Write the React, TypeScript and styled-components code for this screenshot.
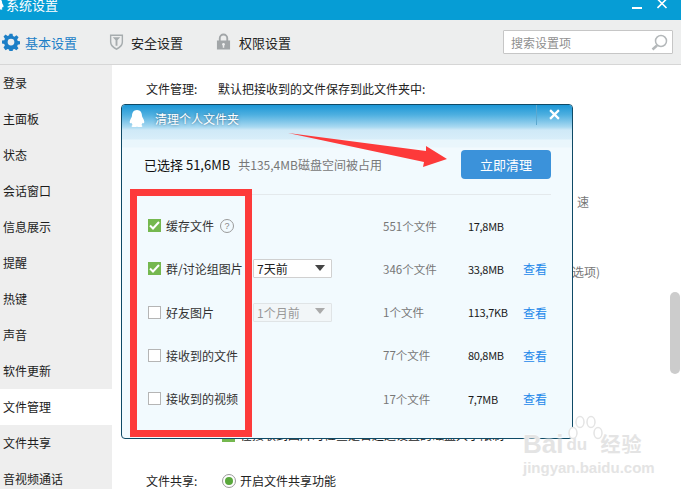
import React from 'react';
import styled, { createGlobalStyle } from 'styled-components';

const Global = createGlobalStyle`
  html, body { margin: 0; padding: 0; background: #fff; }
  body { font-family: "Noto Sans CJK SC", "Liberation Sans", sans-serif; font-size: 12px; color: #222; }
`;
const Page = styled.div`
  position: relative; width: 681px; height: 489px; overflow: hidden; display: flex; flex-direction: column;
`;
const TitleBar = styled.header`
  height: 20px; background: #069dd5; color: #fff; display: flex; align-items: flex-start; flex: none;
  justify-content: space-between; overflow: hidden;
`;
const TitleLeft = styled.div`
  display: flex; align-items: center; gap: 2px; margin-top: -4px; font-size: 13px; line-height: 18px; margin-left: -6px;
`;
const WinButtons = styled.div`
  display: flex; gap: 14px; margin-right: 13px; align-items: flex-start;
`;
const Toolbar = styled.nav`
  height: 44px; background: #edeeee; border-bottom: 1px solid #d6d6d6; flex: none; display: flex; align-items: center;
  box-sizing: content-box; padding-left: 2px;
`;
const Tab = styled.div<{ $active?: boolean; $w: number; $gap: number }>`
  width: ${p => p.$w}px; display: flex; align-items: center; gap: ${p => p.$gap}px; font-size: 13px;
  color: ${p => (p.$active ? '#1c7fc7' : '#222')};
`;
const Search = styled.div`
  margin-left: auto; margin-right: 8px; height: 22px; background: #fff; border: 1px solid #c6c6c6;
  border-radius: 1px; display: flex; align-items: center; justify-content: space-between; padding: 0 4px 0 7px;
  box-sizing: content-box; color: #8f8f8f; font-size: 12px; width: 157px;
`;
const Body = styled.div`
  flex: 1; display: flex; min-height: 0;
`;
const Sidebar = styled.aside`
  width: 112px; background: #eeeeee; flex: none;
`;
const SideItem = styled.div<{ $active?: boolean }>`
  height: 36px; box-sizing: border-box; display: flex; align-items: center; padding: 0 0 2px 3px; font-size: 12px; color: #1c1c1c;
  background: ${p => (p.$active ? '#fff' : 'transparent')};
`;
const Content = styled.main`
  flex: 1; display: flex; flex-direction: column; background: #fff; position: relative; padding-left: 34px;
`;
const BgRow = styled.div<{ $top: number; $indent?: number; $muted?: boolean }>`
  margin-top: ${p => p.$top}px; padding-left: ${p => p.$indent ?? 0}px; height: 16px; line-height: 16px;
  display: flex; align-items: center; white-space: nowrap; color: ${p => (p.$muted ? '#777' : '#222')};
`;
const BgLabel = styled.span`
  width: 72px; flex: none;
`;
const Radio = styled.span`
  width: 12px; height: 12px; border: 1px solid #9a9a9a; border-radius: 50%; margin: 0 4px 0 4px; display: flex;
  align-items: center; justify-content: center; background: #fff; flex: none;
  &::after { content: ''; width: 8px; height: 8px; border-radius: 50%; background: #5aa83c; }
`;
const Scrollbar = styled.div`
  position: absolute; right: 1px; top: 227px; width: 10px; height: 82px; border-radius: 5px; background: #cccccc;
`;
const Dialog = styled.section`
  position: absolute; left: 121px; top: 104px; width: 452px; height: 335px; box-sizing: border-box;
  border: 1px solid #0f4a66; border-radius: 4px; overflow: hidden; display: flex; flex-direction: column;
  background: #f2fafe;
`;
const DialogTitle = styled.div`
  height: 43px; flex: none; display: flex; align-items: flex-start; justify-content: space-between;
  background: linear-gradient(#1c97d6 0, #4fb0e0 10px, #a9d9f1 22px, #cfe9f7 25px, #d8eef9 34px, #e9f6fc 35px, #eaf6fc 42px, #f2fafe 43px);
  color: #fff;
`;
const DialogTitleLeft = styled.div`
  display: flex; align-items: center; gap: 10px; padding: 5px 0 0 7px; font-size: 12px; line-height: 18px;
  text-shadow: 0 0 3px rgba(40,80,110,.8);
`;
const DialogClose = styled.div`
  width: 35px; height: 18px; border-left: 1px solid #5ca8cf; display: flex; justify-content: center;
  align-items: center; padding-bottom: 2px;
`;
const Summary = styled.div`
  height: 47px; margin: 0 21px 0 22px; flex: none; display: flex; align-items: center; justify-content: space-between;
  border-bottom: 1px solid #e4e9ec; padding-bottom: 1px; box-sizing: border-box;
`;
const SummaryText = styled.div`
  display: flex; align-items: baseline; gap: 8px; margin-top: -12px;
`;
const Selected = styled.span`
  font-size: 13px; color: #111;
`;
const Total = styled.span`
  font-size: 12px; color: #777;
`;
const CleanBtn = styled.button`
  width: 90px; height: 29px; border: 0; border-radius: 4px; background: #3b92da; color: #fff; font: inherit;
  font-size: 13px; padding: 0; margin-top: -12px;
`;
const Rows = styled.div`
  display: flex; flex-direction: column; padding-top: 9px;
`;
const Row = styled.div`
  height: 43.25px; display: grid; grid-template-columns: 105px 130px 85px 55px auto; align-items: center; padding-left: 26px;
`;
const Check = styled.span<{ $on?: boolean }>`
  width: 13px; height: 13px; box-sizing: border-box; border: 1px solid ${p => (p.$on ? '#75b84f' : '#b5b5b5')};
  background: ${p => (p.$on ? '#75b84f' : '#fff')}; display: flex; align-items: center; justify-content: center; flex: none;
`;
const CheckCell = styled.div`
  display: flex; align-items: center; gap: 5px; white-space: nowrap; color: #333;
`;
const BgCheckLabel = styled.span`
  margin-left: 5px;
`;
const Help = styled.span`
  width: 12px; height: 12px; border: 1px solid #9a9a9a; border-radius: 50%; color: #888; font-size: 9px; display: flex;
  align-items: center; justify-content: center; margin-left: 1px; box-sizing: content-box; font-family: "Liberation Sans", sans-serif;
`;
const Select = styled.div<{ $off?: boolean }>`
  width: 79px; height: 19px; box-sizing: border-box; border: 1px solid ${p => (p.$off ? '#e0e4e6' : '#d0d0d0')};
  background: ${p => (p.$off ? '#f2f6f8' : '#fff')}; color: ${p => (p.$off ? '#999' : '#222')};
  display: flex; align-items: center; justify-content: space-between; padding: 0 6px 0 3px; border-radius: 1px; font-size: 12px;
  &::after { content: ''; border-left: 5px solid transparent; border-right: 5px solid transparent;
    border-top: 6px solid ${p => (p.$off ? '#aaa' : '#444')}; margin-top: -2px; }
`;
const Count = styled.span`
  color: #777; font-size: 11.5px;
`;
const Size = styled.span`
  color: #1b1b1b; font-size: 11px; letter-spacing: -.3px;
`;
const Link = styled.a`
  color: #2288ea; font-size: 12px;
`;
const RedBox = styled.div`
  position: absolute; left: 130px; top: 189px; width: 122px; height: 248px; box-sizing: border-box; border: 7px solid #fd3a3a;
`;
const Arrow = styled.svg`
  position: absolute; left: 285px; top: 128px;
`;
const Watermark = styled.div`
  position: absolute; left: 523px; top: 415px; width: 125px; height: 60px; color: #e4e4e4;
  font-family: "Liberation Sans", sans-serif; text-shadow: 0 0 2px #fff, 0 0 2px #fff;
`;
const WmTop = styled.div`
  display: flex; align-items: center; font-size: 26px; font-weight: 700; height: 42px; padding-top: 15px;
  box-sizing: border-box; line-height: 26px;
`;
const WmDu = styled.span`
  font-size: 17px; width: 37px; padding-left: 3px; padding-top: 3px; box-sizing: border-box;
`;
const WmCn = styled.span`
  font-family: "Noto Sans CJK SC", sans-serif; font-size: 20px; font-weight: 700; letter-spacing: 1px;
`;
const WmUrl = styled.div`
  font-size: 15px; font-weight: 700; line-height: 16px; margin-top: 3px; white-space: nowrap;
`;
const WmPaw = styled.svg`
  position: absolute; left: 43px; top: 0;
`;

const Gear = () => (
  <svg width="18" height="18" viewBox="0 0 24 24"><path fill="#1c7fc7" fillRule="evenodd" d="M10 1h4l.6 3.1 2 .8L19.3 3l2.8 2.8-1.9 2.7.8 2 3 .5v4l-3 .6-.8 2 1.8 2.6-2.8 2.8-2.6-1.8-2 .8-.6 3.2h-4l-.6-3.2-2-.8-2.6 1.8L2 19.2l1.8-2.6-.8-2L0 14v-4l3.1-.5.8-2L2 4.8 4.8 2l2.7 1.9 2-.8L10 1zm2 6.500a4.500 4.500 0 1 0 0 9 4.500 4.500 0 0 0 0-9z"/></svg>
);
const Shield = () => (
  <svg width="15" height="18" viewBox="0 0 16 18"><path fill="#a6acae" d="M1 1h14v8c0 4-3 6.500-7 8.500C4 15.500 1 13 1 9z"/><path fill="#edeeee" d="M2.500 2.500h11V9c0 3-2.500 5-5.500 6.700C5 14 2.500 12 2.500 9z"/><path fill="#a6acae" d="M4 4h8l-3 3v6H7V7z"/></svg>
);
const Lock = () => (
  <svg width="15" height="18" viewBox="0 0 16 18"><path fill="none" stroke="#a2a6a8" strokeWidth="2" d="M4 8V5a4 4 0 0 1 8 0v3"/><path fill="#a2a6a8" fillRule="evenodd" d="M1 7.500h14V17H1zM8 10a1.500 1.500 0 0 0-.8 2.800V15h1.600v-2.200A1.500 1.500 0 0 0 8 10z"/></svg>
);
const Penguin = ({ size }: { size: number }) => (
  <svg width={size} height={size * 1.13} viewBox="0 0 16 18"><path fill="#fff" d="M8 0C4.500 0 3 2.800 3 6c0 1.200-1.800 3-2.200 5.300-.3 1.800.4 2.600 1.600 1.300.2.900.7 1.700 1.300 2.300-1.400.5-1.700 2.100.6 2.100 1.500 0 2.600-.3 3.700-.4 1.100.1 2.200.4 3.700.4 2.300 0 2-1.600.6-2.100.6-.6 1.100-1.400 1.300-2.300 1.200 1.300 1.900.5 1.600-1.300C15 9 13 7.200 13 6c0-3.200-1.500-6-5-6z"/></svg>
);
const Cross = ({ size, weight }: { size: number; weight: number }) => (
  <svg width={size} height={size} viewBox="0 0 10 10"><path stroke="#fff" strokeWidth={weight} d="M1 1l8 8M9 1l-8 8"/></svg>
);
const Tick = () => (
  <svg width="11" height="9" viewBox="0 0 11 9"><path fill="none" stroke="#fff" strokeWidth="2" d="M1 4.500l3 3L10 1"/></svg>
);
const Loupe = () => (
  <svg width="17" height="17" viewBox="0 0 17 17"><circle cx="10" cy="7" r="5.500" fill="none" stroke="#b4b8ba" strokeWidth="1.500"/><path stroke="#b4b8ba" strokeWidth="2.500" d="M6 11.500L1.500 15.500"/></svg>
);
const Paw = () => (
  <WmPaw width="38" height="34" viewBox="0 0 38 34">
    <g fill="#fff" stroke="#e4e4e4" strokeWidth="1.500">
      <ellipse cx="7" cy="18" rx="4" ry="5.500"/><ellipse cx="14" cy="7" rx="4" ry="5.500"/><ellipse cx="25" cy="7" rx="4" ry="5.500"/><ellipse cx="32" cy="18" rx="4" ry="5.500"/>
    </g>
  </WmPaw>
);

const sideItems = ['登录','主面板','状态','会话窗口','信息展示','提醒','热键','声音','软件更新','文件管理','文件共享','音视频通话'];
const rows = [
  { label: '缓存文件', help: true, count: '551个文件', size: '17,8MB', on: true },
  { label: '群/讨论组图片', sel: '7天前', count: '346个文件', size: '33,8MB', on: true, link: true },
  { label: '好友图片', sel: '1个月前', off: true, count: '1个文件', size: '113,7KB', link: true },
  { label: '接收到的文件', count: '77个文件', size: '80,8MB', link: true },
  { label: '接收到的视频', count: '17个文件', size: '7,7MB', link: true },
];

export default function App() {
  return (
    <Page>
      <Global />
      <TitleBar>
        <TitleLeft><Penguin size={10} /><span>系统设置</span></TitleLeft>
        <WinButtons>
          <svg width="11" height="10" viewBox="0 0 11 10"><rect x="0" y="7" width="10" height="2" fill="#fff"/></svg>
          <svg width="11" height="9" viewBox="0 0 10 9"><path stroke="#fff" strokeWidth="1.600" d="M0 -1l9 9M9 -1l-9 9"/></svg>
        </WinButtons>
      </TitleBar>
      <Toolbar>
        <Tab $active $w={107} $gap={5}><Gear /><span>基本设置</span></Tab>
        <Tab $w={107} $gap={7}><Shield /><span>安全设置</span></Tab>
        <Tab $w={100} $gap={8}><Lock /><span>权限设置</span></Tab>
        <Search><span>搜索设置项</span><Loupe /></Search>
      </Toolbar>
      <Body>
        <Sidebar>
          {sideItems.map(s => <SideItem key={s} $active={s === '文件管理'}>{s}</SideItem>)}
        </Sidebar>
        <Content>
          <BgRow $top={16}><BgLabel>文件管理:</BgLabel><span>默认把接收到的文件保存到此文件夹中:</span></BgRow>
          <BgRow $top={97} $indent={431} $muted>速</BgRow>
          <BgRow $top={54} $indent={426} $muted>选项)</BgRow>
          <BgRow $top={147} $indent={76}><Check $on /><BgCheckLabel>在接收到图片时检查是否超过设置的磁盘大小限制</BgCheckLabel></BgRow>
          <BgRow $top={30}><BgLabel>文件共享:</BgLabel><Radio /><span>开启文件共享功能</span></BgRow>
          <Scrollbar />
        </Content>
      </Body>
      <Dialog>
        <DialogTitle>
          <DialogTitleLeft><Penguin size={16} /><span>清理个人文件夹</span></DialogTitleLeft>
          <DialogClose><Cross size={11} weight={2} /></DialogClose>
        </DialogTitle>
        <Summary>
          <SummaryText><Selected>已选择 51,6MB</Selected><Total>共135,4MB磁盘空间被占用</Total></SummaryText>
          <CleanBtn>立即清理</CleanBtn>
        </Summary>
        <Rows>
          {rows.map(r => (
            <Row key={r.label}>
              <CheckCell>
                <Check $on={r.on}>{r.on && <Tick />}</Check>
                <span>{r.label}</span>
                {r.help && <Help>?</Help>}
              </CheckCell>
              <div>{r.sel && <Select $off={r.off}>{r.sel}</Select>}</div>
              <Count>{r.count}</Count>
              <Size>{r.size}</Size>
              {r.link ? <Link>查看</Link> : <span />}
            </Row>
          ))}
        </Rows>
      </Dialog>
      <Watermark>
        <Paw />
        <WmTop>Bai<WmDu>du</WmDu><WmCn>经验</WmCn></WmTop>
        <WmUrl>jingyan.baidu.com</WmUrl>
      </Watermark>
      <Arrow width="170" height="50" viewBox="0 0 170 50">
        <path fill="#fd3a3a" d="M3 5L141 23 141 18 162 31 138 39 139 34z"/>
      </Arrow>
      <RedBox />
    </Page>
  );
}
